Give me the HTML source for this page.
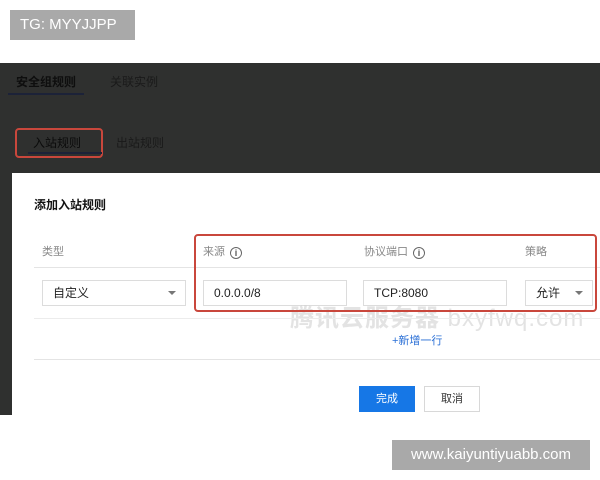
<!DOCTYPE html>
<html><head><meta charset="utf-8"><style>
*{margin:0;padding:0;box-sizing:border-box}
body{width:600px;height:480px;position:relative;background:#fff;font-family:"Liberation Sans","Noto Sans CJK SC",sans-serif;overflow:hidden}
.a{position:absolute}
.inp{position:absolute;border:1px solid #dcdcdc;background:#fff;font-size:12px;color:#222;padding-left:10px;line-height:24px;height:26px}
.arr{position:absolute;right:9px;top:10px;width:0;height:0;border-left:4px solid transparent;border-right:4px solid transparent;border-top:4px solid #777}
.hd{position:absolute;top:243px;font-size:11px;color:#888}
.ic{display:inline-block;width:12px;height:12px;border:1px solid #666;border-radius:50%;font-size:9px;line-height:10px;text-align:center;color:#555;margin-left:5px;vertical-align:-1px;font-weight:bold}
</style></head><body>
<div class="a" style="left:10px;top:10px;width:125px;height:30px;background:#a9a9a9;color:#fff;font-size:15px;line-height:30px;padding-left:10px">TG: MYYJJPP</div>

<div class="a" style="left:0;top:63px;width:600px;height:352px;background:#2f302f"></div>
<div class="a" style="left:16px;top:73px;font-size:12px;color:#0e0e0e;font-weight:bold">安全组规则</div>
<div class="a" style="left:8px;top:93px;width:76px;height:2px;background:#1c2238"></div>
<div class="a" style="left:110px;top:73px;font-size:12px;color:#1a1a1a">关联实例</div>
<div class="a" style="left:15px;top:128px;width:88px;height:30px;border:2px solid #c9473c;border-radius:4px"></div>
<div class="a" style="left:33px;top:134px;font-size:12px;color:#0b0b0b">入站规则</div>
<div class="a" style="left:28px;top:152px;width:74px;height:2px;background:#1c2238"></div>
<div class="a" style="left:116px;top:134px;font-size:12px;color:#1a1a1a">出站规则</div>

<div class="a" style="left:12px;top:173px;width:588px;height:242px;background:#fff"></div>
<div class="a" style="left:34px;top:196px;font-size:12px;font-weight:bold;color:#111">添加入站规则</div>

<div class="hd" style="left:42px">类型</div>
<div class="hd" style="left:203px">来源<span class="ic">i</span></div>
<div class="hd" style="left:364px">协议端口<span class="ic">i</span></div>
<div class="hd" style="left:525px">策略</div>
<div class="a" style="left:34px;top:267px;width:566px;height:1px;background:#e4e4e4"></div>

<div class="inp" style="left:42px;top:280px;width:144px">自定义<span class="arr"></span></div>
<div class="inp" style="left:203px;top:280px;width:144px">0.0.0.0/8</div>
<div class="inp" style="left:363px;top:280px;width:144px">TCP:8080</div>
<div class="inp" style="left:525px;top:280px;width:68px">允许<span class="arr"></span></div>

<div class="a" style="left:290px;top:298px;font-size:24px;letter-spacing:1px;color:rgba(185,185,185,0.4);font-weight:bold;white-space:nowrap">腾讯云服务器 <span style="font-weight:normal">bxyfwq.com</span></div>

<div class="a" style="left:194px;top:234px;width:403px;height:78px;border:2px solid #c9473c;border-radius:4px"></div>
<div class="a" style="left:34px;top:318px;width:566px;height:1px;background:#ececec"></div>
<div class="a" style="left:392px;top:332px;font-size:11px;color:#2a6fd6">+新增一行</div>
<div class="a" style="left:34px;top:359px;width:566px;height:1px;background:#e4e4e4"></div>

<div class="a" style="left:359px;top:386px;width:56px;height:26px;background:#1677e6;color:#fff;font-size:11px;text-align:center;line-height:26px">完成</div>
<div class="a" style="left:424px;top:386px;width:56px;height:26px;border:1px solid #d8d8d8;color:#333;font-size:11px;text-align:center;line-height:24px">取消</div>

<div class="a" style="left:392px;top:440px;width:198px;height:30px;background:#a9a9a9;color:#fff;font-size:15px;line-height:30px;text-align:center">www.kaiyuntiyuabb.com</div>
</body></html>
